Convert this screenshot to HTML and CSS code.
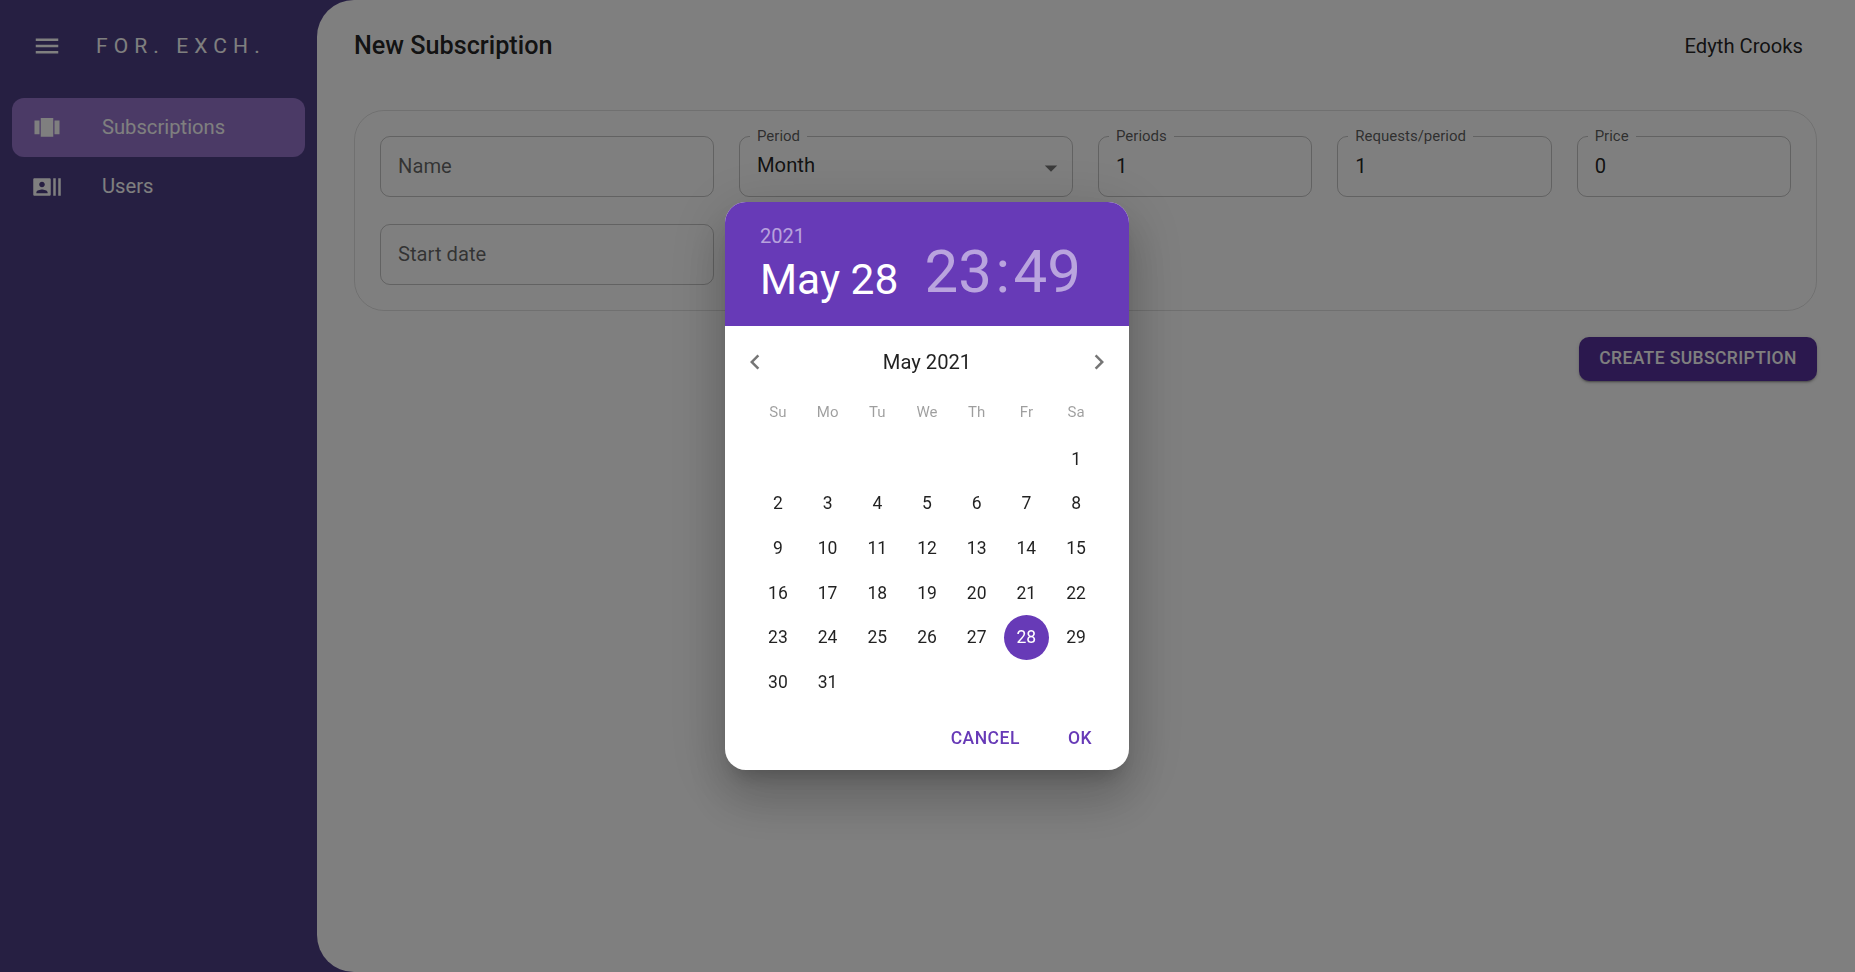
FILE: index.html
```html
<!DOCTYPE html>
<html lang="en">

<head>
  <meta charset="UTF-8">
  <meta name="viewport" content="width=device-width, initial-scale=1.0">
  <title>New Subscription</title>
  <link rel="stylesheet" href="styles.css">
</head>

<body>
  <div class="app">
    <aside class="sidebar">
      <div class="brand">
        <svg class="icon" viewBox="0 0 24 24"><path d="M3 18h18v-2H3v2zm0-5h18v-2H3v2zm0-7v2h18V6H3z"/></svg>
        <span class="brand-name">FOR. EXCH.</span>
      </div>
      <nav class="nav">
        <a class="nav-item active">
          <svg class="icon" viewBox="0 0 24 24"><path d="M7 19h10V4H7v15zm-5-2h4V6H2v11zM18 6v11h4V6h-4z"/></svg>
          <span>Subscriptions</span>
        </a>
        <a class="nav-item">
          <svg class="icon" viewBox="0 0 24 24"><path d="M21 5v14h2V5h-2zm-4 14h2V5h-2v14zM14 5H2c-.55 0-1 .45-1 1v12c0 .55.45 1 1 1h12c.55 0 1-.45 1-1V6c0-.55-.45-1-1-1zM8 7.75c1.24 0 2.25 1.01 2.25 2.25S9.24 12.25 8 12.25 5.75 11.24 5.75 10 6.76 7.75 8 7.75zM12.5 17h-9v-.75c0-1.5 3-2.25 4.5-2.25s4.5.75 4.5 2.25V17z"/></svg>
          <span>Users</span>
        </a>
      </nav>
    </aside>

    <main class="content">
      <header class="topbar">
        <h1>New Subscription</h1>
        <span class="user">Edyth Crooks</span>
      </header>

      <section class="card">
        <div class="field"><span class="placeholder">Name</span></div>
        <div class="field">
          <label>Period</label>
          <span class="value select-value">Month</span>
          <svg class="select-arrow" viewBox="0 0 24 24"><path d="M7 10l5 5 5-5z"/></svg>
        </div>
        <div class="field"><label>Periods</label><span class="value">1</span></div>
        <div class="field"><label>Requests/period</label><span class="value">1</span></div>
        <div class="field"><label>Price</label><span class="value">0</span></div>
        <div class="field"><span class="placeholder">Start date</span></div>
      </section>

      <div class="actions">
        <button class="primary">CREATE SUBSCRIPTION</button>
      </div>
    </main>
  </div>

  <div class="backdrop">
    <div class="dialog">
      <div class="picker-head">
        <div class="head-date">
          <div class="head-year">2021</div>
          <div class="head-day">May 28</div>
        </div>
        <div class="head-time"><span>23</span><span class="colon">:</span><span>49</span></div>
      </div>

      <div class="month-row">
        <svg class="chevron" viewBox="0 0 24 24"><path d="M15.41 7.41L14 6l-6 6 6 6 1.41-1.41L10.83 12z"/></svg>
        <span>May 2021</span>
        <svg class="chevron" viewBox="0 0 24 24"><path d="M10 6L8.59 7.41 13.17 12l-4.58 4.59L10 18l6-6z"/></svg>
      </div>

      <div class="weekdays">
        <span>Su</span><span>Mo</span><span>Tu</span><span>We</span><span>Th</span><span>Fr</span><span>Sa</span>
      </div>

      <div class="days">
        <span></span><span></span><span></span><span></span><span></span><span></span><span>1</span>
        <span>2</span><span>3</span><span>4</span><span>5</span><span>6</span><span>7</span><span>8</span>
        <span>9</span><span>10</span><span>11</span><span>12</span><span>13</span><span>14</span><span>15</span>
        <span>16</span><span>17</span><span>18</span><span>19</span><span>20</span><span>21</span><span>22</span>
        <span>23</span><span>24</span><span>25</span><span>26</span><span>27</span><span class="selected">28</span><span>29</span>
        <span>30</span><span>31</span>
      </div>

      <div class="dialog-actions">
        <button>CANCEL</button>
        <button>OK</button>
      </div>
    </div>
  </div>
</body>
</html>
```

FILE: styles.css
```css
* {
  box-sizing: border-box;
}

html, body {
  height: 100%;
  margin: 0;
  padding: 0;
  overflow: hidden;
  font-family: Roboto, "Liberation Sans", sans-serif;
}

.app {
  display: flex;
  height: 100%;
  background-color: #4d3f85;
}

.icon {
  width: 30px;
  height: 30px;
  fill: #fff;
  flex-shrink: 0;
}

/* sidebar */
.sidebar {
  width: 317px;
  flex-shrink: 0;
  color: #fff;
}

.brand {
  display: flex;
  align-items: center;
  height: 92px;
  padding-left: 32px;
  gap: 34px;
}

.brand-name {
  font-size: 21px;
  letter-spacing: 6.1px;
}

.nav {
  padding: 6px 12px 0;
}

.nav-item {
  display: flex;
  align-items: center;
  height: 59px;
  padding-left: 20px;
  gap: 40px;
  font-size: 20.2px;
  border-radius: 12px;
}

.nav-item span {
  margin-top: -1px;
}

.nav-item.active {
  background-color: #9674cc;
}

/* main area */
.content {
  flex-grow: 1;
  padding: 0 38px 0 37px;
  background-color: #fff;
  border-radius: 37px 0 0 37px;
}

.topbar {
  display: flex;
  align-items: center;
  justify-content: space-between;
  height: 91px;
  margin-right: 14px;
}

.topbar h1 {
  margin: 0;
  font-size: 25.2px;
  font-weight: 500;
  color: rgba(0, 0, 0, 0.87);
}

.user {
  font-size: 20.2px;
  color: rgba(0, 0, 0, 0.87);
}

.card {
  display: grid;
  grid-template-columns: 334px 334px 1fr 1fr 1fr;
  gap: 27px 25px;
  margin-top: 19px;
  padding: 25px;
  border: 1px solid rgba(0, 0, 0, 0.12);
  border-radius: 30px;
}

.field {
  position: relative;
  display: flex;
  align-items: center;
  height: 61px;
  padding: 0 17px 1px;
  border: 1px solid rgba(0, 0, 0, 0.23);
  border-radius: 10px;
  font-size: 20.2px;
}

.field label {
  position: absolute;
  top: -9px;
  left: 10px;
  padding: 0 7px;
  font-size: 15px;
  line-height: 17px;
  background-color: #fff;
  color: rgba(0, 0, 0, 0.65);
}

.placeholder {
  color: rgba(0, 0, 0, 0.6);
}

.value {
  color: rgba(0, 0, 0, 0.87);
}

.select-value {
  margin-top: -2px;
}

.select-arrow {
  position: absolute;
  right: 6px;
  top: 16px;
  width: 30px;
  height: 30px;
  fill: rgba(0, 0, 0, 0.54);
}

.actions {
  display: flex;
  justify-content: flex-end;
  margin-top: 26px;
}

button {
  font-family: inherit;
  border: none;
  cursor: pointer;
}

.primary {
  height: 44px;
  width: 238px;
  padding: 0 0 3px;
  font-size: 17.5px;
  font-weight: 500;
  letter-spacing: 0.4px;
  color: #fff;
  background-color: #57319c;
  border-radius: 10px;
  box-shadow: 0 3px 1px -2px rgba(0, 0, 0, 0.2), 0 2px 2px 0 rgba(0, 0, 0, 0.14), 0 1px 5px 0 rgba(0, 0, 0, 0.12);
}

/* date picker dialog */
.backdrop {
  position: fixed;
  inset: 0;
  display: flex;
  align-items: center;
  justify-content: center;
  background-color: rgba(0, 0, 0, 0.5);
}

.dialog {
  width: 404px;
  height: 568px;
  margin-right: 1px;
  background-color: #fff;
  border-radius: 21px;
  overflow: hidden;
  box-shadow: 0 14px 19px -9px rgba(0, 0, 0, 0.2), 0 30px 47px 4px rgba(0, 0, 0, 0.14), 0 11px 57px 10px rgba(0, 0, 0, 0.12);
}

.picker-head {
  display: flex;
  align-items: center;
  justify-content: space-between;
  height: 124px;
  padding: 0 48px 0 35px;
  background-color: #673ab7;
  color: #fff;
}

.head-date {
  padding-top: 1px;
}

.head-year {
  font-size: 20px;
  line-height: 24px;
  color: rgba(255, 255, 255, 0.54);
}

.head-day {
  margin-top: 7px;
  font-size: 42.5px;
  line-height: 50px;
}

.head-time {
  display: flex;
  margin-top: 16px;
  font-size: 60px;
  line-height: 70px;
  color: rgba(255, 255, 255, 0.54);
}

.colon {
  margin: 0 3.5px;
}

.month-row {
  display: flex;
  align-items: center;
  justify-content: space-between;
  height: 72px;
  padding: 0 15px;
  font-size: 20.2px;
  color: rgba(0, 0, 0, 0.87);
}

.chevron {
  width: 30px;
  height: 30px;
  fill: rgba(0, 0, 0, 0.54);
}

.weekdays,
.days {
  display: grid;
  grid-template-columns: repeat(7, 49.7px);
  justify-content: center;
  text-align: center;
}

.weekdays {
  height: 28px;
  line-height: 28px;
  margin-bottom: 10px;
  font-size: 15px;
  color: rgba(0, 0, 0, 0.38);
}

.days {
  grid-auto-rows: 44.7px;
  font-size: 17.5px;
  color: rgba(0, 0, 0, 0.87);
}

.days span {
  display: flex;
  align-items: center;
  justify-content: center;
  justify-self: center;
  width: 45px;
  height: 45px;
}

.days .selected {
  background-color: #673ab7;
  border-radius: 50%;
  color: #fff;
}

.dialog-actions {
  display: flex;
  justify-content: flex-end;
  gap: 48px;
  padding: 24px 37px 0 0;
}

.dialog-actions button {
  padding: 0;
  font-size: 17.5px;
  font-weight: 500;
  letter-spacing: 0.5px;
  line-height: 20px;
  color: #673ab7;
  background: none;
}
```
